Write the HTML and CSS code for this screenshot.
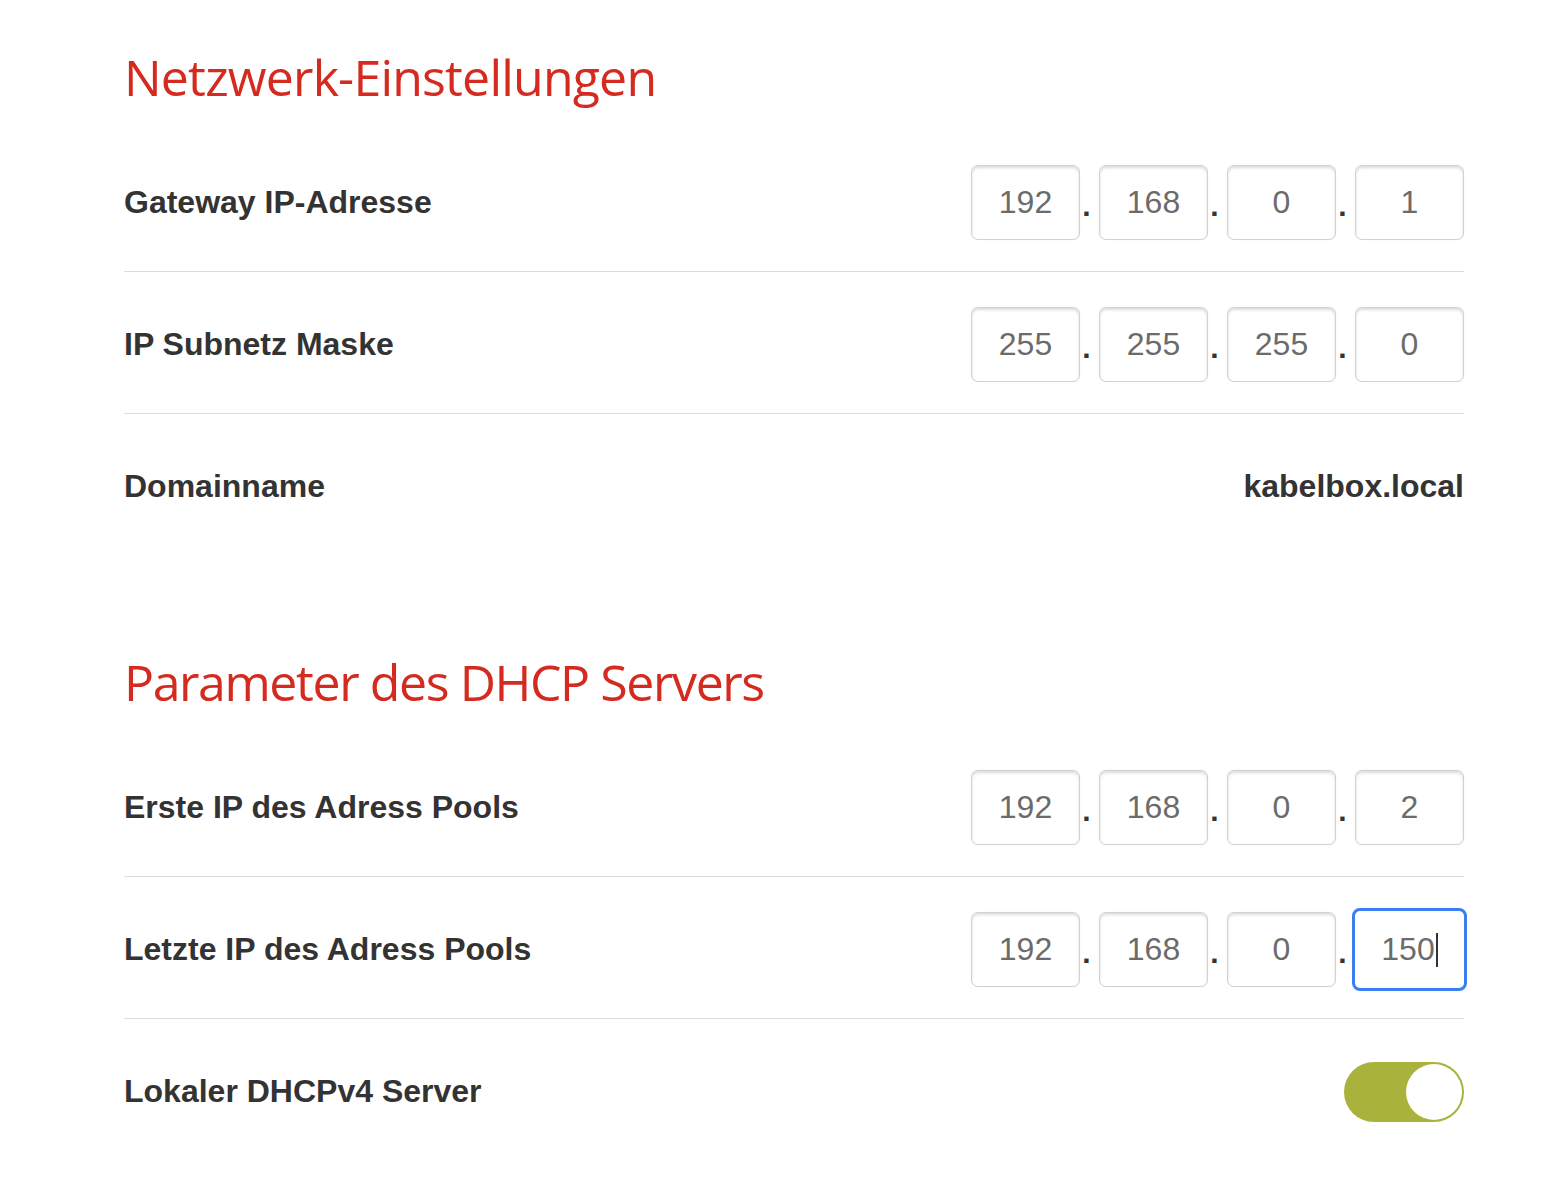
FILE: index.html
```html
<!DOCTYPE html>
<html lang="de">
<head>
<meta charset="utf-8">
<title>Netzwerk-Einstellungen</title>
<link rel="stylesheet" href="styles.css">
</head>
<body>
<main class="page">
  <section class="section">
    <h2 class="heading">Netzwerk-Einstellungen</h2>
    <div class="row">
      <div class="label">Gateway IP-Adresse</div>
      <div class="ip">
        <div class="octet">192</div><span class="dot">.</span>
        <div class="octet">168</div><span class="dot">.</span>
        <div class="octet">0</div><span class="dot">.</span>
        <div class="octet">1</div>
      </div>
    </div>
    <div class="row">
      <div class="label">IP Subnetz Maske</div>
      <div class="ip">
        <div class="octet">255</div><span class="dot">.</span>
        <div class="octet">255</div><span class="dot">.</span>
        <div class="octet">255</div><span class="dot">.</span>
        <div class="octet">0</div>
      </div>
    </div>
    <div class="row row-last">
      <div class="label">Domainname</div>
      <div class="value">kabelbox.local</div>
    </div>
  </section>
  <section class="section section-second">
    <h2 class="heading heading-tight">Parameter des DHCP Servers</h2>
    <div class="row">
      <div class="label">Erste IP des Adress Pools</div>
      <div class="ip">
        <div class="octet">192</div><span class="dot">.</span>
        <div class="octet">168</div><span class="dot">.</span>
        <div class="octet">0</div><span class="dot">.</span>
        <div class="octet">2</div>
      </div>
    </div>
    <div class="row">
      <div class="label">Letzte IP des Adress Pools</div>
      <div class="ip">
        <div class="octet">192</div><span class="dot">.</span>
        <div class="octet">168</div><span class="dot">.</span>
        <div class="octet">0</div><span class="dot">.</span>
        <div class="octet octet-focus">150<span class="caret"></span></div>
      </div>
    </div>
    <div class="row row-last">
      <div class="label">Lokaler DHCPv4 Server</div>
      <div class="toggle"><span class="knob"></span></div>
    </div>
  </section>
</main>
</body>
</html>
```

FILE: styles.css
```css
html, body {
  margin: 0;
  padding: 0;
  background: #ffffff;
}

.page {
  width: 1340px;
  margin-left: 124px;
  font-family: "Liberation Sans", Arial, sans-serif;
  color: #333333;
}

.section {
  display: flex;
  flex-direction: column;
}

.section-second {
  margin-top: 50px;
}

.heading {
  margin: 0;
  padding-top: 44px;
  height: 130px;
  box-sizing: border-box;
  font-family: "Open Sans", "Noto Sans", sans-serif;
  font-weight: 400;
  font-size: 50px;
  line-height: 66px;
  letter-spacing: -0.8px;
  color: #d42a1f;
}

.heading-tight {
  letter-spacing: -1.4px;
}

.row {
  display: flex;
  align-items: center;
  justify-content: space-between;
  padding: 35px 0 31px;
  border-bottom: 1px solid #dcdcdc;
  min-height: 75px;
}

.row-last {
  border-bottom: none;
}

.label {
  font-size: 32px;
  font-weight: 700;
  color: #333333;
}

.value {
  font-size: 32px;
  font-weight: 700;
  color: #333333;
}

.ip {
  display: flex;
  align-items: center;
}

.octet {
  width: 109px;
  height: 75px;
  box-sizing: border-box;
  border: 1px solid #d2d2d2;
  border-radius: 7px;
  box-shadow: inset 0 2px 3px rgba(0, 0, 0, 0.14), 0 0 1px rgba(0, 0, 0, 0.12);
  display: flex;
  align-items: center;
  justify-content: center;
  font-size: 32px;
  color: #6b6b6b;
}

.octet-focus {
  width: 115px;
  height: 83px;
  margin: -4px -3px -4px -3px;
  border: 3px solid #3a7ef0;
  border-radius: 8px;
  box-shadow: none;
}

.caret {
  display: inline-block;
  width: 2px;
  height: 34px;
  background: #333333;
  margin-left: 1px;
}

.dot {
  width: 19px;
  box-sizing: border-box;
  padding-right: 6px;
  text-align: center;
  font-size: 30px;
  font-weight: 700;
  color: #333333;
  padding-top: 6px;
}

.toggle {
  width: 120px;
  height: 60px;
  border-radius: 30px;
  background: #a9b23a;
  box-sizing: border-box;
  padding: 2px;
  display: flex;
  justify-content: flex-end;
  align-items: center;
}

.knob {
  width: 56px;
  height: 56px;
  border-radius: 50%;
  background: #ffffff;
}
```
